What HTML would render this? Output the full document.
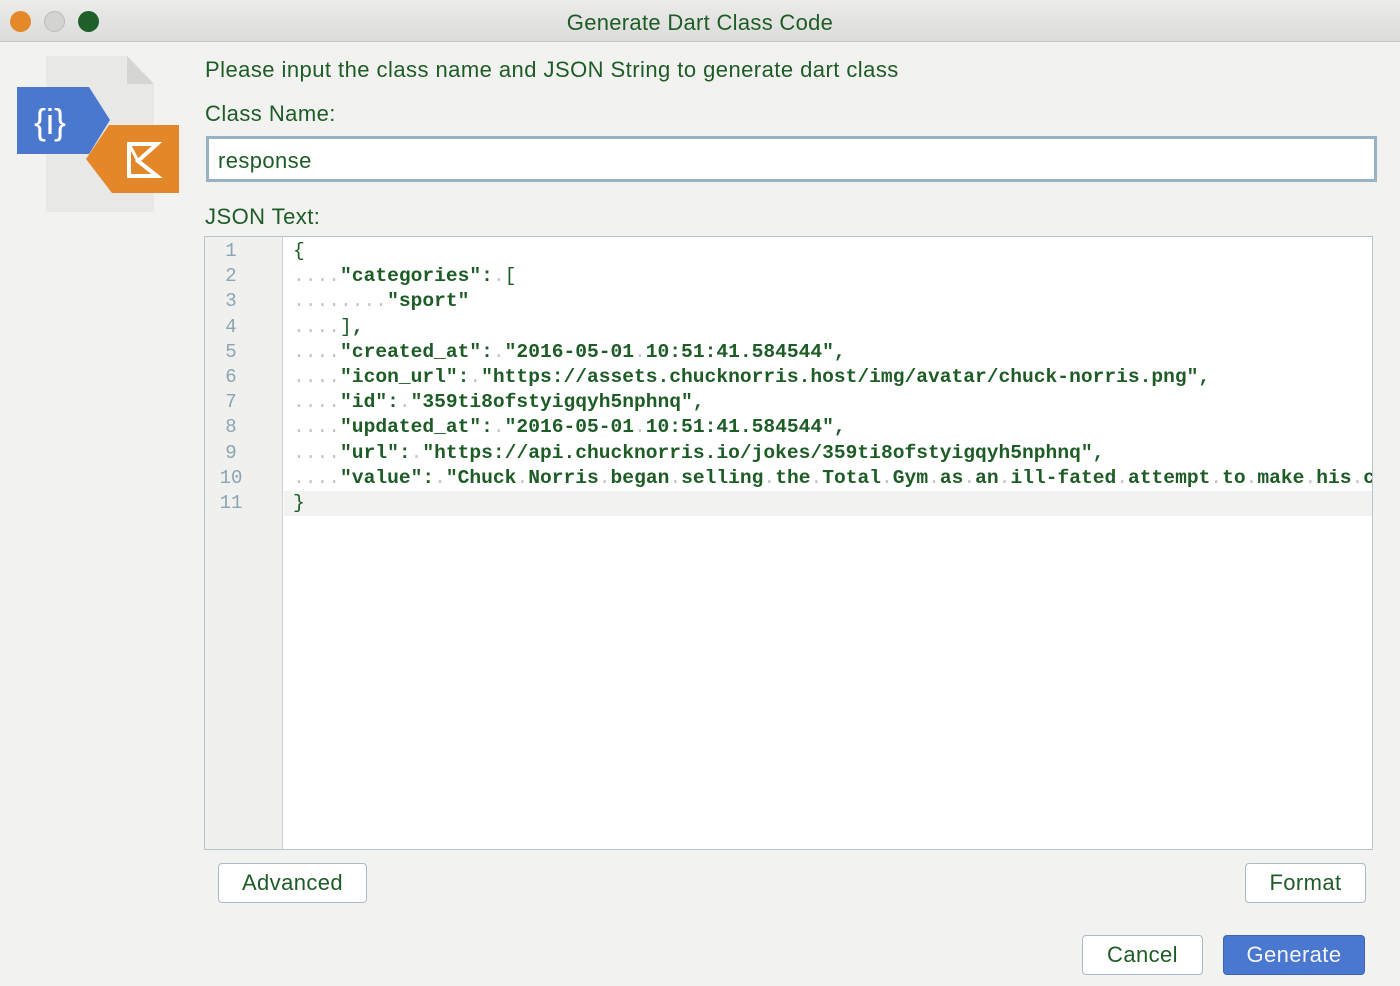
<!DOCTYPE html>
<html><head><meta charset="utf-8">
<style>
*{margin:0;padding:0;box-sizing:border-box}
body{width:1400px;height:986px;background:#f2f2f0;font-family:"Liberation Sans",sans-serif;color:#1e5c26;position:relative;overflow:hidden}
.title{position:absolute;left:0;top:0;width:1400px;height:42px;background:linear-gradient(#ebebe9,#dcdcda);border-bottom:1px solid #c8c8c6}
.title .t{position:absolute;left:0;width:1400px;text-align:center;top:10px;font-size:22px;letter-spacing:0.3px;color:#1e5c26}
.dot{position:absolute;top:11px;width:21px;height:21px;border-radius:50%}
.lbl{position:absolute;font-size:22px;letter-spacing:0.45px;color:#1e5c26}
.input{position:absolute;left:206px;top:136px;width:1171px;height:46px;border:3px solid #98b2c4;background:#fff;font-size:22px;letter-spacing:0.4px;padding:9px 9px;color:#1e5c26}
.editor{position:absolute;left:204px;top:236px;width:1169px;height:614px;border:1px solid #b9c4c8;background:#fff;overflow:hidden}
.gutter{position:absolute;left:0;top:0;width:78px;height:100%;background:#f0f0ee;border-right:1px solid #d0d0d0}
.gutter div{height:25.2px;line-height:25.2px;font-family:"Liberation Mono",monospace;font-size:19px;color:#8aa5b3;padding-left:10px;text-align:left;padding-left:0;width:52px;text-align:center}
.code{position:absolute;left:88px;top:0;font-family:"Liberation Mono",monospace;font-size:19.6px;font-weight:bold;color:#1e5c26}
.code div{height:25.2px;line-height:25.2px;white-space:pre}
.w{color:#c4c4c4;font-weight:normal}
.n{font-weight:normal}
.cur{position:absolute;left:79px;top:254px;width:1100px;height:25px;background:#f2f2f0}
.btn{position:absolute;background:#fff;border:1.5px solid #a9bcc4;border-radius:4px;font-size:22px;letter-spacing:0.4px;color:#1e5c26;text-align:center;line-height:38px;height:40px}
</style></head><body>
<div class="title">
<div class="dot" style="left:10px;background:#e4892a"></div>
<div class="dot" style="left:44px;background:#d3d3d1;border:1px solid #bbb"></div>
<div class="dot" style="left:78px;background:#1f5f2a"></div>
<div class="t">Generate Dart Class Code</div>
</div>
<svg style="position:absolute;left:14px;top:52px" width="170" height="170" viewBox="0 0 170 170">
<path d="M32 4 H113 L140 32 V160 H32 Z" fill="#e8e8e6"/>
<path d="M113 4 L140 32 H113 Z" fill="#d5d5d3"/>
<path d="M3 35 H75 L96 68 L75 102 H3 Z" fill="#4a78cf"/>
<text x="20" y="82" font-family="Liberation Sans" font-size="36" fill="#fff">{i}</text>
<path d="M95 73 H165 V141 H98 L72 107 Z" fill="#e38729"/>
<path d="M115 92 H143 L124 109 L143 124 H115 Z" fill="none" stroke="#fff" stroke-width="4"/>
<path d="M115 92 L124 109" stroke="#fff" stroke-width="3"/>
</svg>
<div class="lbl" style="left:205px;top:57px">Please input the class name and JSON String to generate dart class</div>
<div class="lbl" style="left:205px;top:101px">Class Name:</div>
<div class="input">response</div>
<div class="lbl" style="left:205px;top:204px">JSON Text:</div>
<div class="editor">
<div class="cur"></div>
<div class="gutter"><div style="height:2px"></div><div>1</div><div>2</div><div>3</div><div>4</div><div>5</div><div>6</div><div>7</div><div>8</div><div>9</div><div>10</div><div>11</div></div>
<div class="code"><div style="height:2px"></div><div><span class="n">{</span></div><div><span class="w">....</span>"categories":<span class="w">.</span><span class="n">[</span></div><div><span class="w">........</span>"sport"</div><div><span class="w">....</span><span class="n">]</span>,</div><div><span class="w">....</span>"created_at":<span class="w">.</span>"2016-05-01<span class="w">.</span>10:51:41.584544",</div><div><span class="w">....</span>"icon_url":<span class="w">.</span>"https://assets.chucknorris.host/img/avatar/chuck-norris.png",</div><div><span class="w">....</span>"id":<span class="w">.</span>"359ti8ofstyigqyh5nphnq",</div><div><span class="w">....</span>"updated_at":<span class="w">.</span>"2016-05-01<span class="w">.</span>10:51:41.584544",</div><div><span class="w">....</span>"url":<span class="w">.</span>"https://api.chucknorris.io/jokes/359ti8ofstyigqyh5nphnq",</div><div><span class="w">....</span>"value":<span class="w">.</span>"Chuck<span class="w">.</span>Norris<span class="w">.</span>began<span class="w">.</span>selling<span class="w">.</span>the<span class="w">.</span>Total<span class="w">.</span>Gym<span class="w">.</span>as<span class="w">.</span>an<span class="w">.</span>ill-fated<span class="w">.</span>attempt<span class="w">.</span>to<span class="w">.</span>make<span class="w">.</span>his<span class="w">.</span>contribution</div><div><span class="n">}</span></div></div>
</div>
<div class="btn" style="left:218px;top:863px;width:149px">Advanced</div>
<div class="btn" style="left:1245px;top:863px;width:121px">Format</div>
<div class="btn" style="left:1082px;top:935px;width:121px">Cancel</div>
<div class="btn" style="left:1223px;top:935px;width:142px;background:#4a78d1;border-color:#3b66b8;color:#f4f4f4">Generate</div>
</body></html>
